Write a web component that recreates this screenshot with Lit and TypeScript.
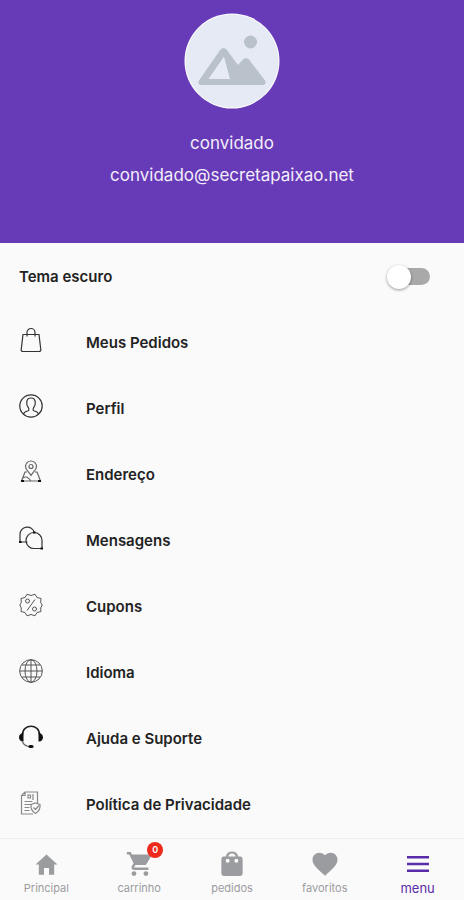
import { LitElement, html, css, svg } from "lit";
import { customElement, state } from "lit/decorators.js";

const outline = (body: unknown) => svg`<svg class="icon" viewBox="0 0 24 24" aria-hidden="true">${body}</svg>`;

const menu = [
  {
    label: "Meus Pedidos",
    icon: outline(svg`<path d="M4 6.5h16l1.800 15q.2 2-2 2H4.200q-2.200 0-2-2zM8 8.500V4.500a4 4 0 0 1 8 0v4"/>`),
  },
  {
    label: "Perfil",
    icon: outline(svg`<circle cx="12" cy="12" r="11.2"/><path d="M4.500 20q.5-2 4-3c1.600-.5 1.700-1.500 1-3C7 11 6.500 4 12 4s5 7 2.500 10c-.7 1.500-.6 2.500 1 3q3.500 1 4 3"/>`),
  },
  {
    label: "Endereço",
    icon: outline(svg`<g class="soft"><path d="M12 15.500C9 11 6.500 9.500 6.500 6.500a5.500 5.500 0 0 1 11 0c0 3-2.500 4.500-5.500 9z"/><circle cx="12" cy="6.5" r="2"/><path d="M8 12H6L2.500 21h19L18 12h-2M4 18q4-3 8 3"/></g><path class="dot" d="M2 20h3v2H2zM19 20h3v2h-3z"/>`),
  },
  {
    label: "Mensagens",
    icon: outline(svg`<path d="M8.500 16H1V8.500a7.300 7.300 0 0 1 14.300-2.200"/><path d="M23 22.500h-7.500a8 8 0 1 1 7.500-8z"/><path class="dot" d="M0 15h2.500v2H0zM21.500 21.500H24v2h-2.500zM14 5.500h2.500v2H14z"/>`),
  },
  {
    label: "Cupons",
    icon: outline(svg`<g class="mid"><path d="M8 1.200 12 2.500l4-1.300 2 3.300 4 1-.3 4L23.200 12l-1.500 3 .3 3.500-4 1-2 3.300-4-1.300-4 1.300-2-3.300-4-1 .3-3.500L.8 12l1.500-2.500L2 5.500l4-1z"/><circle cx="8.5" cy="8" r="2"/><circle cx="15.5" cy="16" r="2"/><path d="m16 6.500-8 11"/></g>`),
  },
  {
    label: "Idioma",
    icon: outline(svg`<g class="mid"><circle cx="12" cy="12" r="11.3"/><ellipse cx="12" cy="12" rx="6" ry="11.3"/><path d="M12 .7v22.600M.7 12h22.600M3 6h18M3 18h18"/></g>`),
  },
  {
    label: "Ajuda e Suporte",
    icon: outline(svg`<path class="band" d="M3.500 9.500C3.500 -1.500 20.500 -1.500 20.500 9.500"/><path class="dot" d="M4.500 8v8.500C2 17 0 15 0 12.300S2 8 4.500 8zM19.500 8v8.500c2.500.5 4.500-1.500 4.500-4.200S22 8 19.500 8z"/><path class="soft" d="M3.500 16.500q1 4 6.500 5"/><rect class="dot" x="9.5" y="20" width="5" height="3" rx="1.5"/>`),
  },
  {
    label: "Política de Privacidade",
    icon: outline(svg`<g class="faint"><path d="M18.500 12V1H6L2.500 4.500V23H14M2.500 4.500H6V1M9 4h2.500v3H9zM14 3v6M5.500 10.500h8M5.500 13.500h7M5.500 16.500h5M5.500 19.500h5"/><path d="m16.500 12 4.500 1.500c.5 4-1 7-4.500 9-3.500-2-5-5-4.500-9z"/><path d="m14.500 16.500 2 2 3.500-4"/></g>`),
  },
];

const tabs = [
  {
    label: "Principal",
    icon: svg`<svg class="glyph home" viewBox="0 0 512 512" aria-hidden="true"><path d="M208 448V320h96v128h97.600V256H464L256 64 48 256h62.400v192z"/></svg>`,
  },
  {
    label: "carrinho",
    badge: 0,
    icon: svg`<svg class="glyph" viewBox="0 0 512 512" aria-hidden="true"><circle cx="170" cy="419" r="41"/><circle cx="374" cy="419" r="41"/><path d="M48 51v42h42l74 151-31 51c-3 5-5 12-5 20 0 28 19 42 45 42h243v-40H178c-3 0-5-2-5-5l2-5 21-33h155c15 0 29-8 36-22l75-129c1-2 2-6 2-10 0-12-9-20-21-20H135l-19-42z"/></svg>`,
  },
  {
    label: "pedidos",
    icon: svg`<svg class="glyph" viewBox="0 0 24 24" aria-hidden="true"><path fill-rule="evenodd" d="M18.500 6H17c-.5-2.500-2.200-4-5-4S7.500 3.500 7 6H5.500c-1.300 0-2 .9-2 2v11.500c0 1.100.9 2 2 2h13c1.100 0 2-.9 2-2V8c0-1.100-.7-2-2-2zM12 3.500c1.700 0 2.600 1 3 2.500H9c.4-1.500 1.300-2.500 3-2.500zM8.500 7.700a1.600 1.600 0 1 1 0 3.200 1.600 1.600 0 0 1 0-3.200zm7 0a1.600 1.600 0 1 1 0 3.200 1.600 1.600 0 0 1 0-3.200z"/></svg>`,
  },
  {
    label: "favoritos",
    icon: svg`<svg class="glyph" viewBox="0 0 24 24" aria-hidden="true"><path d="m12 21.350-1.450-1.320C5.400 15.360 2 12.280 2 8.500 2 5.420 4.420 3 7.500 3c1.740 0 3.410.81 4.500 2.090C13.090 3.810 14.760 3 16.500 3 19.580 3 22 5.420 22 8.500c0 3.780-3.400 6.860-8.550 11.540z"/></svg>`,
  },
  {
    label: "menu",
    active: true,
    icon: svg`<svg class="glyph" viewBox="0 0 30 30" aria-hidden="true"><path d="M4 7h22v2.500H4zM4 13.800h22v2.400H4zM4 20.500h22V23H4z"/></svg>`,
  },
];

@customElement("app-root")
export class AppRoot extends LitElement {
  @state() private dark = false;

  static styles = css`
    :host {
      display: flex;
      flex-direction: column;
      min-height: 100vh;
      background: #fafafa;
      color: #222;
      font-family: Inter, Roboto, "Liberation Sans", sans-serif;
    }
    * { box-sizing: border-box; }
    a { color: inherit; text-decoration: none; }
    .profile {
      display: flex;
      flex-direction: column;
      align-items: center;
      padding: 13px 16px 52px;
      background: #673ab7;
      color: #f3eefa;
      font-size: 17px;
      line-height: 32px;
    }
    .avatar { width: 96px; height: 96px; margin-bottom: 18px; }
    .profile p, .profile h1 { margin: 0; font-size: inherit; font-weight: 400; }
    .list {
      flex: 1;
      display: grid;
      grid-auto-rows: 1fr;
      margin: 0;
      padding: 0;
      list-style: none;
      font-size: 15px;
      font-weight: 600;
      line-height: 20px;
    }
    .list li { display: grid; min-height: 60px; }
    .row { display: flex; align-items: center; padding: 1px 20px 0 19px; }
    .theme { justify-content: space-between; padding-right: 34px; }
    .icon {
      width: 24px;
      height: 24px;
      margin: 0 43px 5px 0;
      fill: none;
      stroke: #333;
      stroke-width: 1.2;
      overflow: visible;
    }
    .soft { stroke: #666; }
    .mid { stroke: #555; stroke-width: 1; }
    .faint { stroke: #888; }
    .band { stroke: #222; stroke-width: 1.5; }
    .dot { fill: #111; stroke: none; }
    .switch {
      appearance: none;
      position: relative;
      display: flex;
      align-items: center;
      width: 43px;
      height: 24px;
      margin: 0;
    }
    .switch::before {
      content: "";
      position: absolute;
      right: 0;
      width: 38px;
      height: 17px;
      border-radius: 9px;
      background: #a9a9a9;
    }
    .switch::after {
      content: "";
      position: relative;
      width: 24px;
      height: 24px;
      border-radius: 50%;
      background: #fff;
      box-shadow: 0 1px 3px rgb(0 0 0 / 40%);
    }
    .switch:checked { justify-content: flex-end; }
    .switch:checked::before { background: #673ab7; }
    .tabs {
      display: grid;
      grid-template-columns: repeat(5, 1fr);
      min-height: 62px;
      border-top: 1px solid #f0f0f0;
      color: #9a9c9f;
      font-size: 11px;
      line-height: 16px;
    }
    .tab {
      display: flex;
      flex-direction: column;
      align-items: center;
      padding-top: 10px;
    }
    .active { color: #5a2ca8; font-size: 13px; }
    .mark { position: relative; display: grid; place-items: center; width: 30px; height: 30px; margin-bottom: 1px; }
    .glyph { width: 30px; height: 30px; fill: currentColor; }
    .home { width: 27px; height: 27px; }
    .badge {
      position: absolute;
      top: -7px;
      right: -9px;
      width: 16px;
      height: 16px;
      border-radius: 50%;
      background: #ee2a1c;
      color: #fff;
      font-size: 9px;
      font-weight: 600;
      text-align: center;
    }
  `;

  render() {
    return html`
      <header class="profile">
        <svg class="avatar" viewBox="0 0 96 96" role="img" aria-label="Avatar">
          <circle cx="48" cy="48" r="47.5" fill="#fff" />
          <circle cx="48" cy="48" r="46.5" fill="#e6eaf4" />
          <g fill="#b9c1ca">
            <circle cx="66.5" cy="29" r="6.5" />
            <path fill-rule="evenodd" d="M36.500 36.500q3-3 6 0L54 52l5-5.500q3-3 6 0L81 67.500q2 4-2 4.500H17q-4-.5-2-4.500zM40 43.500 24.500 66H46z" />
          </g>
        </svg>
        <h1>convidado</h1>
        <p>convidado@secretapaixao.net</p>
      </header>
      <ul class="list">
        <li>
          <label class="row theme">
            <span>Tema escuro</span>
            <input class="switch" type="checkbox" role="switch" .checked=${this.dark}
              @change=${(e: Event) => (this.dark = (e.target as HTMLInputElement).checked)} />
          </label>
        </li>
        ${menu.map((m) => html`<li><a class="row" href="#">${m.icon}<span>${m.label}</span></a></li>`)}
      </ul>
      <nav class="tabs">
        ${tabs.map((t) => html`
          <a class="tab ${t.active ? "active" : ""}" href="#">
            <span class="mark">${t.icon}${t.badge === undefined ? "" : html`<span class="badge">${t.badge}</span>`}</span>
            <span>${t.label}</span>
          </a>`)}
      </nav>
    `;
  }
}
